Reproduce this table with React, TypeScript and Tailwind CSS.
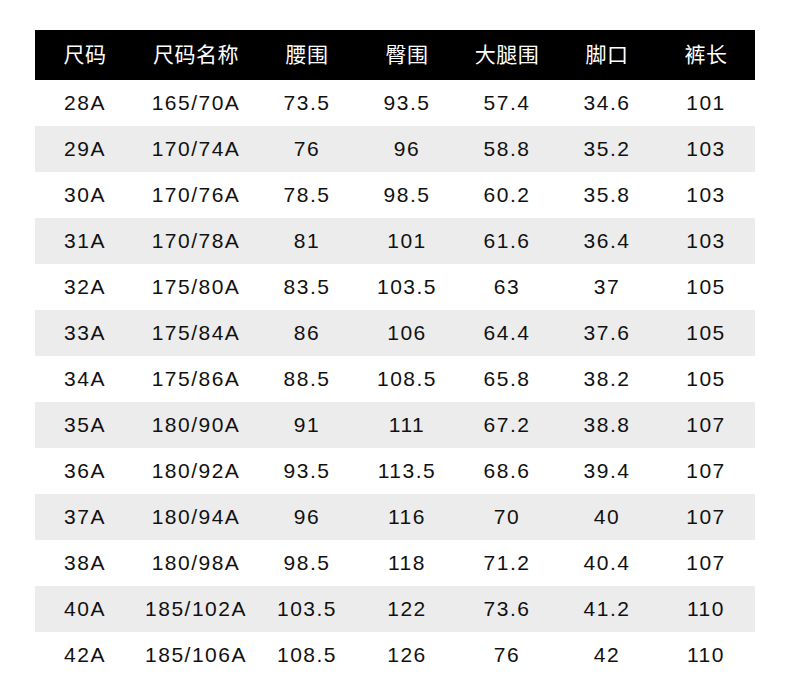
const headers = ["尺码", "尺码名称", "腰围", "臀围", "大腿围", "脚口", "裤长"];

const rows: string[][] = [
  ["28A", "165/70A", "73.5", "93.5", "57.4", "34.6", "101"],
  ["29A", "170/74A", "76", "96", "58.8", "35.2", "103"],
  ["30A", "170/76A", "78.5", "98.5", "60.2", "35.8", "103"],
  ["31A", "170/78A", "81", "101", "61.6", "36.4", "103"],
  ["32A", "175/80A", "83.5", "103.5", "63", "37", "105"],
  ["33A", "175/84A", "86", "106", "64.4", "37.6", "105"],
  ["34A", "175/86A", "88.5", "108.5", "65.8", "38.2", "105"],
  ["35A", "180/90A", "91", "111", "67.2", "38.8", "107"],
  ["36A", "180/92A", "93.5", "113.5", "68.6", "39.4", "107"],
  ["37A", "180/94A", "96", "116", "70", "40", "107"],
  ["38A", "180/98A", "98.5", "118", "71.2", "40.4", "107"],
  ["40A", "185/102A", "103.5", "122", "73.6", "41.2", "110"],
  ["42A", "185/106A", "108.5", "126", "76", "42", "110"],
];

const cols = "grid grid-cols-[100px_122px_100px_100px_100px_100px_98px]";

export default function App() {
  return (
    <div
      className="w-[790px] h-[678px] bg-white pt-[30px] pl-[35px]"
      style={{ fontFamily: '"Liberation Sans", "Noto Sans CJK SC", sans-serif' }}
    >
      <div className="w-[720px]">
        <div className={`${cols} h-[50px] bg-black text-white text-[21px] tracking-[0.5px]`}>
          {headers.map((h) => (
            <div key={h} className="flex items-center justify-center">
              {h}
            </div>
          ))}
        </div>
        {rows.map((r, i) => (
          <div
            key={r[0]}
            className={`${cols} h-[46px] text-[21px] tracking-[1.5px] text-[#111] ${
              i % 2 === 1 ? "bg-[#ececec]" : "bg-white"
            }`}
          >
            {r.map((c, j) => (
              <div key={j} className="flex items-center justify-center">
                {c}
              </div>
            ))}
          </div>
        ))}
      </div>
    </div>
  );
}
